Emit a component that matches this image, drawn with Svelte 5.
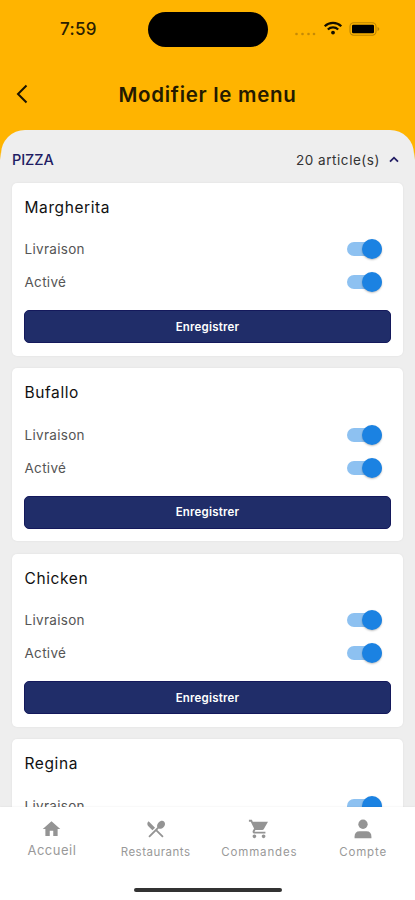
<script>
  let pizzas = $state([
    { name: 'Margherita', delivery: true, enabled: true },
    { name: 'Bufallo', delivery: true, enabled: true },
    { name: 'Chicken', delivery: true, enabled: true },
    { name: 'Regina', delivery: true, enabled: true }
  ]);
</script>

{#snippet toggleRow(label, checked, onToggle)}
  <div class="option">
    <span class="option-label">{label}</span>
    <button class="switch" class:on={checked} role="switch" aria-checked={checked} aria-label={label} onclick={onToggle}>
      <span class="thumb"></span>
    </button>
  </div>
{/snippet}

<div class="screen">
  <header>
    <div class="status-bar">
      <span class="time">7:59</span>
      <span class="island"></span>
      <div class="status-icons">
        <svg class="signal" width="23" height="5" viewBox="0 0 23 5" fill="#c58a06">
          <circle cx="2.5" cy="3" r="1.3" />
          <circle cx="8.5" cy="3" r="1.3" />
          <circle cx="14.5" cy="3" r="1.3" />
          <circle cx="20" cy="3" r="1.3" />
        </svg>
        <svg class="wifi" width="20" height="14" viewBox="0 0 20 14" fill="none" stroke="#140f00" stroke-width="2.2">
          <path d="M1.7 5.2a12 12 0 0 1 16.6 0" />
          <path d="M4.8 8.5a7.6 7.6 0 0 1 10.4 0" />
          <circle cx="10" cy="11.6" r="1.9" fill="#140f00" stroke="none" />
        </svg>
        <svg class="battery" width="31" height="14" viewBox="0 0 31 14">
          <rect x="1" y=".8" width="26" height="12.4" rx="3.6" fill="none" stroke="#bd8500" stroke-width="1.1" />
          <rect x="3" y="2.7" width="22" height="8.6" rx="1.2" fill="#000" />
          <path d="M28.5 5v4q1.8-.5 1.8-2t-1.8-2z" fill="#bd8500" />
        </svg>
      </div>
    </div>
    <div class="title-bar">
      <button class="back" aria-label="Retour">
        <svg width="12" height="20" viewBox="0 0 12 20" fill="none" stroke="#1a1300" stroke-width="2">
          <path d="M10.500 1.500 2 10l8.500 8.500" />
        </svg>
      </button>
      <h1>Modifier le menu</h1>
    </div>
  </header>

  <main>
    <div class="category">
      <h2>PIZZA</h2>
      <span class="count">20 article(s)</span>
      <svg width="10" height="7" viewBox="0 0 10 7" fill="none" stroke="#211c63" stroke-width="1.8">
        <path d="M1 5.6 5 1.7l4 3.9" />
      </svg>
    </div>

    {#each pizzas as pizza}
      <section class="card">
        <h3>{pizza.name}</h3>
        {@render toggleRow('Livraison', pizza.delivery, () => (pizza.delivery = !pizza.delivery))}
        {@render toggleRow('Activé', pizza.enabled, () => (pizza.enabled = !pizza.enabled))}
        <button class="save">Enregistrer</button>
      </section>
    {/each}
  </main>

  <nav>
    <div class="tabs">
      <a class="tab home" href="#accueil">
        <svg viewBox="0 0 24 24"><path d="M10 20v-6h4v6h5v-8h3L12 3 2 12h3v8z" /></svg>
        <span>Accueil</span>
      </a>
      <a class="tab" href="#restaurants">
        <svg viewBox="0 0 24 24">
          <path d="M8.1 13.34l2.83-2.83L3.91 3.5a4.008 4.008 0 0 0 0 5.66l4.19 4.18zm6.78-1.81c1.53.71 3.68.21 5.27-1.38 1.91-1.91 2.28-4.65.81-6.12-1.46-1.46-4.2-1.1-6.12.81-1.59 1.59-2.09 3.74-1.38 5.27L3.7 19.87l1.41 1.41L12 14.41l6.88 6.88 1.41-1.41L13.41 13l1.47-1.47z" />
        </svg>
        <span>Restaurants</span>
      </a>
      <a class="tab wide" href="#commandes">
        <svg viewBox="0 0 24 24">
          <path d="M7 18c-1.1 0-1.99.9-1.99 2S5.9 22 7 22s2-.9 2-2-.9-2-2-2zM1 2v2h2l3.6 7.59-1.35 2.45c-.16.28-.25.61-.25.96 0 1.1.9 2 2 2h12v-2H7.42c-.14 0-.25-.11-.25-.25l.03-.12.9-1.63h7.45c.75 0 1.41-.41 1.75-1.03L21.800 4H5.21l-.94-2H1zm16 16c-1.1 0-1.99.9-1.99 2s.89 2 1.99 2 2-.9 2-2-.9-2-2-2z" />
        </svg>
        <span>Commandes</span>
      </a>
      <a class="tab wide" href="#compte">
        <svg viewBox="0 0 24 24">
          <circle cx="12" cy="6.8" r="5.1" />
          <path d="M2.800 22.200v-1.700q0-6 5.500-6h7.400q5.500 0 5.500 6v1.700z" />
        </svg>
        <span>Compte</span>
      </a>
    </div>
    <span class="home-indicator"></span>
  </nav>
</div>

<style>
  :global(body) {
    background: #fff;
  }

  .screen {
    width: 100%;
    height: 900px;
    display: flex;
    flex-direction: column;
    overflow: hidden;
    background: linear-gradient(#ffb400 152px, #eee 160px);
    font-family: Inter, "Open Sans", sans-serif;
    color: #111;
  }

  button {
    border: none;
    padding: 0;
    background: none;
    font-family: inherit;
    cursor: pointer;
  }

  h1,
  h2,
  h3 {
    margin: 0;
  }

  svg {
    display: block;
  }

  header {
    height: 130px;
    flex-shrink: 0;
  }

  .status-bar {
    height: 58px;
    display: grid;
    grid-template-columns: 148px 120px 1fr;
    align-items: center;
  }

  .time {
    padding-left: 60px;
    font-size: 17px;
    font-weight: 500;
    letter-spacing: 0.3px;
    color: #2b2000;
  }

  .island {
    height: 35px;
    border-radius: 18px;
    background: #000;
  }

  .status-icons {
    display: flex;
    align-items: center;
    padding-left: 26px;
    height: 14px;
  }

  .signal {
    margin-top: 8px;
  }

  .wifi {
    margin-left: 6px;
    margin-top: -2px;
  }

  .battery {
    margin-left: 6px;
    margin-top: -1px;
  }

  .title-bar {
    height: 72px;
    display: grid;
    grid-template-columns: 60px 1fr 60px;
    align-items: center;
  }

  .back {
    padding-left: 16px;
    justify-self: start;
  }

  h1 {
    font-size: 20.5px;
    font-weight: 600;
    letter-spacing: 0.7px;
    text-align: center;
    color: #241a00;
  }

  main {
    flex: 1;
    min-height: 0;
    overflow: hidden;
    margin: 0 1px;
    padding: 0 11px;
    border-radius: 24px 24px 0 0;
    background: #eee;
  }

  .category {
    height: 52.5px;
    padding: 7px 4px 0 0;
    box-sizing: border-box;
    display: flex;
    align-items: center;
  }

  h2 {
    flex: 1;
    font-size: 14.5px;
    font-weight: 500;
    letter-spacing: -0.1px;
    color: #211c63;
  }

  .count {
    margin-right: 9px;
    font-size: 13.5px;
    letter-spacing: 0.55px;
    color: #333;
  }

  .card {
    height: 173px;
    margin-bottom: 12.5px;
    padding: 12px;
    box-sizing: border-box;
    border-radius: 5px;
    background: #fff;
    box-shadow: 0 0 2px rgba(0, 0, 0, 0.08);
  }

  h3 {
    height: 24px;
    line-height: 25px;
    margin-bottom: 14px;
    padding-left: 0.5px;
    font-size: 15.5px;
    font-weight: 400;
    letter-spacing: 0.6px;
    color: #111;
  }

  .option {
    height: 33px;
    display: flex;
    align-items: center;
    justify-content: space-between;
    padding-right: 9px;
  }

  .option-label {
    padding-left: 0.5px;
    font-size: 13.5px;
    letter-spacing: 0.3px;
    color: #555;
  }

  .switch {
    width: 35px;
    height: 14px;
    border-radius: 7px;
    background: #c4c4c4;
    display: flex;
    align-items: center;
  }

  .switch.on {
    background: #8dc1f1;
    justify-content: flex-end;
  }

  .thumb {
    width: 20px;
    height: 20px;
    flex-shrink: 0;
    border-radius: 50%;
    background: #fff;
    box-shadow: 0 1px 2px rgba(0, 0, 0, 0.25);
  }

  .on .thumb {
    background: #1b82e2;
  }

  .save {
    width: 100%;
    height: 33px;
    margin-top: 11.5px;
    border-radius: 5px;
    border: 1px solid #14195c;
    background: #202d69;
    color: #fff;
    font-size: 11.5px;
    font-weight: 600;
    letter-spacing: 0.2px;
  }

  nav {
    height: 93px;
    flex-shrink: 0;
    display: flex;
    flex-direction: column;
    align-items: center;
    background: #fff;
    box-shadow: 0 0 2px rgba(0, 0, 0, 0.08);
  }

  .tabs {
    width: 100%;
    height: 81px;
    display: grid;
    grid-template-columns: repeat(4, 1fr);
  }

  .tab {
    display: flex;
    flex-direction: column;
    align-items: center;
    padding-top: 11px;
    text-decoration: none;
    color: #999;
    font-size: 11.5px;
    letter-spacing: 0.5px;
  }

  .tab svg {
    width: 22px;
    height: 22px;
    fill: #949494;
  }

  .tab span {
    line-height: 16px;
    margin-top: 4px;
  }

  .wide {
    letter-spacing: 0.85px;
  }

  .home span {
    font-size: 13px;
    margin-top: 2px;
  }

  .home svg {
    width: 21px;
  }

  .home-indicator {
    width: 148px;
    height: 4px;
    border-radius: 2px;
    background: #333;
  }
</style>
